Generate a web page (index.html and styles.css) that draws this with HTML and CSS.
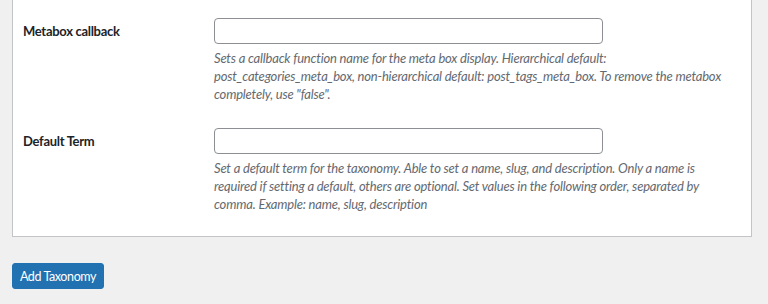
FILE: index.html
```html
<!DOCTYPE html>
<html lang="en">
<head>
<meta charset="utf-8">
<title>Add Taxonomy</title>
<link rel="stylesheet" href="styles.css">
</head>
<body>
<div class="wrap">
  <div class="panel">
    <div class="row">
      <div class="label">Metabox callback</div>
      <div class="field">
        <input class="text" type="text">
        <p class="desc">Sets a callback function name for the meta box display. Hierarchical default:<br>post_categories_meta_box, non-hierarchical default: post_tags_meta_box. To remove the metabox<br>completely, use "false".</p>
      </div>
    </div>
    <div class="row">
      <div class="label">Default Term</div>
      <div class="field">
        <input class="text" type="text">
        <p class="desc">Set a default term for the taxonomy. Able to set a name, slug, and description. Only a name is<br>required if setting a default, others are optional. Set values in the following order, separated by<br>comma. Example: name, slug, description</p>
      </div>
    </div>
  </div>
  <button class="btn" type="button">Add Taxonomy</button>
</div>
</body>
</html>
```

FILE: styles.css
```css
html, body {
  margin: 0;
  padding: 0;
  background: #f0f0f1;
}
body {
  font-family: "Lato", "Noto Sans", sans-serif;
  font-size: 13px;
  color: #1d2327;
  width: 768px;
  height: 304px;
  overflow: hidden;
}
.wrap {
  padding: 0 16px 0 12px;
}
.panel {
  background: #fff;
  border: 1px solid #c3c4c7;
  border-top: none;
  padding: 18px 10px 23px 10px;
  width: 718px;
}
.row {
  display: grid;
  grid-template-columns: 191px 1fr;
}
.row + .row {
  margin-top: 25px;
}
.label {
  font-weight: 700;
  line-height: 26px;
  letter-spacing: -0.3px;
}
.text {
  display: block;
  box-sizing: border-box;
  width: 389px;
  height: 26px;
  margin: 0;
  border: 1px solid #8c8f94;
  border-radius: 4px;
  background: #fff;
  padding: 0 8px;
}
.desc {
  margin: 5px 0 0 0;
  font-style: italic;
  color: #646970;
  line-height: 18px;
  letter-spacing: -0.19px;
  white-space: nowrap;
}
.btn {
  display: block;
  margin-top: 26px;
  box-sizing: border-box;
  width: 92px;
  height: 26px;
  padding: 0;
  border: 1px solid #2271b1;
  border-radius: 3px;
  background: #2271b1;
  color: #fff;
  font-family: inherit;
  font-size: 12.5px;
  letter-spacing: -0.4px;
}
```
